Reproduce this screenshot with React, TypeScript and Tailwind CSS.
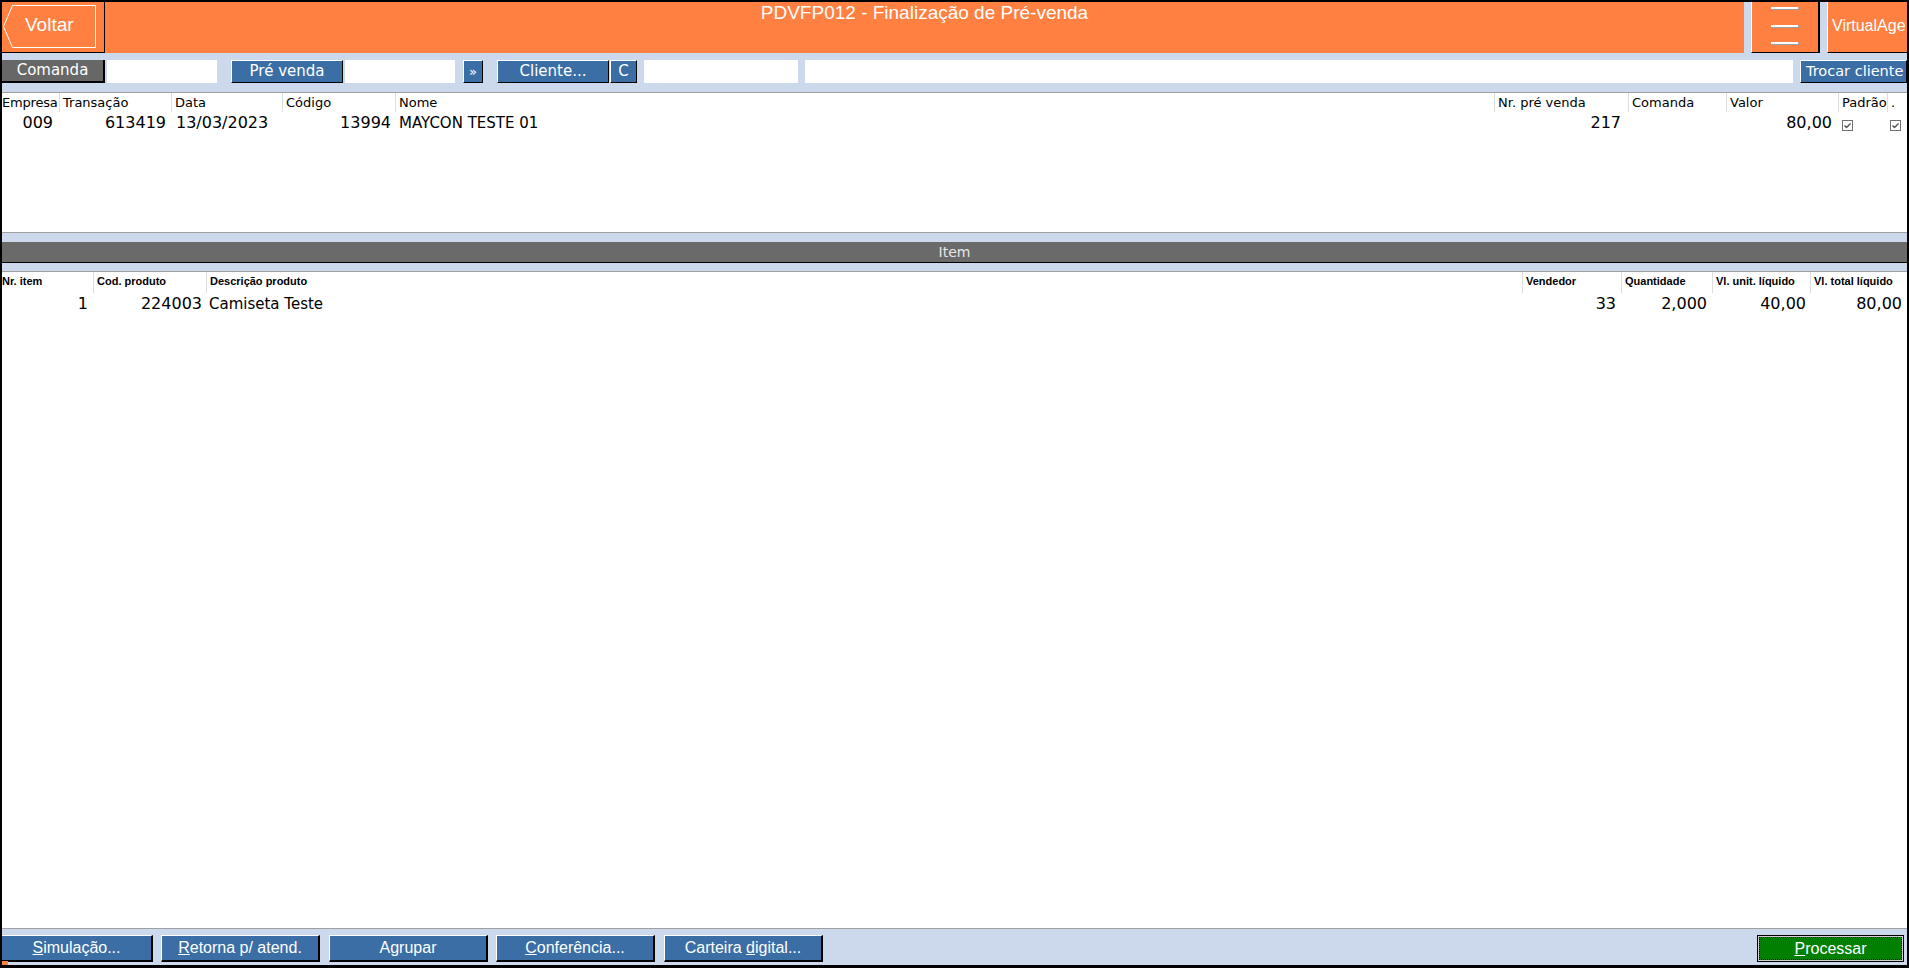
import type { ReactNode } from "react";

const ORANGE = "bg-[#ff8040]";

type Col = { label: string; value?: ReactNode; num?: boolean; check?: boolean; pr?: string };

const vendaCols: Col[] = [
  { label: "Empresa", value: "009", num: true, pr: "pr-[6px]" },
  { label: "Transação", value: "613419", num: true },
  { label: "Data", value: "13/03/2023" },
  { label: "Código", value: "13994", num: true, pr: "pr-[4px]" },
  { label: "Nome", value: "MAYCON TESTE 01" },
  { label: "Nr. pré venda", value: "217", num: true, pr: "pr-[7px]" },
  { label: "Comanda", value: "" },
  { label: "Valor", value: "80,00", num: true, pr: "pr-[6px]" },
  { label: "Padrão", check: true },
  { label: ".", check: true },
];

const itemCols: Col[] = [
  { label: "Nr. item", value: "1", num: true },
  { label: "Cod. produto", value: "224003", num: true, pr: "pr-[4px]" },
  { label: "Descrição produto", value: "Camiseta Teste" },
  { label: "Vendedor", value: "33", num: true },
  { label: "Quantidade", value: "2,000", num: true },
  { label: "Vl. unit. líquido", value: "40,00", num: true, pr: "pr-[4px]" },
  { label: "Vl. total líquido", value: "80,00", num: true },
];

function CheckBox() {
  return (
    <svg width="11" height="11" viewBox="0 0 11 11" aria-hidden="true">
      <rect x="0.5" y="0.5" width="10" height="10" fill="white" stroke="#6f6f6f" />
      <path d="M2.5 5.5 L4.5 7.5 L8.5 3.5" fill="none" stroke="#4a4a4a" strokeWidth="1.3" />
    </svg>
  );
}

function ToolButton({ children, className }: { children: ReactNode; className: string }) {
  return (
    <button
      className={
        "h-[23px] shrink-0 bg-[#3a6ea5] text-white leading-none border border-t-white border-l-white border-r-black border-b-black " +
        className
      }
    >
      {children}
    </button>
  );
}

function FootButton({ children, className }: { children: ReactNode; className: string }) {
  return (
    <button
      className={
        "h-[27px] shrink-0 bg-[#3a6ea5] text-white text-[16px] leading-none font-['Liberation_Sans',Arial,sans-serif] border-t border-l border-t-white border-l-white border-r-2 border-b-2 border-r-black border-b-black " +
        className
      }
    >
      {children}
    </button>
  );
}

function Header() {
  return (
    <div className="flex h-[51px] shrink-0 font-['Liberation_Sans',Arial,sans-serif] text-white">
      {/* Voltar */}
      <div className={`relative flex h-full w-[103px] shrink-0 items-center border-r border-b border-black ${ORANGE}`}>
        <svg className="absolute left-0 top-0" width="100" height="50" aria-hidden="true">
          <polygon points="10.5,3.5 93.5,3.5 93.5,45.5 10.5,45.5 1.5,24.5" fill="none" stroke="white" strokeWidth="1" />
        </svg>
        <span className="pl-[23px] pb-[3px] text-[19px]">Voltar</span>
      </div>
      <div className={`flex-1 text-center text-[19px] leading-[21px] ${ORANGE}`}>
        PDVFP012 - Finalização de Pré-venda
      </div>
      <div className="w-[7px] shrink-0" />
      {/* Menu */}
      <div className={`flex w-[69px] shrink-0 flex-col items-center border-l border-white border-r-2 border-r-black border-b border-b-black pt-[5px] ${ORANGE}`}>
        <div className="h-[3px] w-[28px] bg-white border-b border-r border-[#a0a0a0]" />
        <div className="mt-[15px] h-[3px] w-[28px] bg-white border-b border-r border-[#a0a0a0]" />
        <div className="mt-[14px] h-[3px] w-[28px] bg-white border-b border-r border-[#a0a0a0]" />
      </div>
      <div className="w-[7px] shrink-0" />
      <div className={`flex w-[80px] shrink-0 items-center overflow-hidden whitespace-nowrap border-l border-white border-b border-b-black pl-[4px] pb-[2px] text-[16px] ${ORANGE}`}>
        VirtualAge
      </div>
    </div>
  );
}

function Toolbar() {
  return (
    <div className="flex h-[40px] shrink-0 items-start overflow-hidden whitespace-nowrap border-b border-[#a0a0a0] pt-[7px] text-[15px]">
      <div className="flex h-[23px] w-[103px] shrink-0 items-center justify-center bg-[#676767] text-white border-r-2 border-b-2 border-black">
        Comanda
      </div>
      <div className="ml-[2px] h-[23px] w-[110px] shrink-0 bg-white" />
      <ToolButton className="ml-[14px] w-[112px]">Pré venda</ToolButton>
      <div className="ml-[2px] h-[23px] w-[110px] shrink-0 bg-white" />
      <ToolButton className="ml-[8px] w-[20px] text-[13px]">»</ToolButton>
      <ToolButton className="ml-[14px] w-[112px]">Cliente...</ToolButton>
      <ToolButton className="ml-[1px] w-[27px]">C</ToolButton>
      <div className="ml-[7px] h-[23px] w-[154px] shrink-0 bg-white" />
      <div className="ml-[7px] h-[23px] w-[988px] shrink-0 bg-white" />
      <ToolButton className="ml-[7px] w-[107px] pl-[5px] text-left text-[14.5px]">Trocar cliente</ToolButton>
    </div>
  );
}

function VendaGrid() {
  return (
    <div className="h-[140px] shrink-0 overflow-hidden border-b border-[#a0a0a0] bg-white text-black">
      <div className="grid grid-cols-[57px_112px_111px_113px_1fr_134px_98px_112px_49px_20px]">
        {vendaCols.map((c, i) => (
          <div
            key={c.label}
            className={
              "h-[19px] overflow-hidden whitespace-nowrap text-[13px] leading-[19px] " +
              (i === 0 ? "tracking-[-0.2px]" : "border-l border-[#dedede] pl-[3px]")
            }
          >
            {c.label}
          </div>
        ))}
        {vendaCols.map((c, i) => (
          <div
            key={c.label + "-v"}
            className={
              "h-[22px] overflow-hidden whitespace-nowrap leading-[22px] " +
              (c.check
                ? i === 8
                  ? "pl-[4px] pt-[8px]"
                  : "pl-[3px] pt-[8px]"
                : c.num
                  ? "text-right text-[16px] " + (c.pr ?? "pr-[5px]")
                  : i === 2
                    ? "pl-[5px] text-[16px]"
                    : "pl-[4px] text-[15px]")
            }
          >
            {c.check ? <CheckBox /> : c.value}
          </div>
        ))}
      </div>
    </div>
  );
}

function ItemBar() {
  return (
    <div className="shrink-0">
      <div className="h-[9px]" />
      <div className="flex h-[21px] items-center justify-center border-b border-black bg-[#6a6a6a] text-[14px] text-[#e6e6e6]">
        Item
      </div>
      <div className="h-[9px] border-b border-[#a0a0a0]" />
    </div>
  );
}

function ItemGrid() {
  return (
    <div className="min-h-0 flex-1 overflow-hidden bg-white text-black">
      <div className="grid grid-cols-[91px_113px_1fr_99px_91px_98px_97px]">
        {itemCols.map((c, i) => (
          <div
            key={c.label}
            className={
              "h-[21px] overflow-hidden whitespace-nowrap text-[11px] font-bold leading-[19px] font-['Liberation_Sans',Arial,sans-serif] " +
              (i === 0 ? "" : "border-l border-[#dedede] pl-[3px]")
            }
          >
            {c.label}
          </div>
        ))}
        {itemCols.map((c) => (
          <div
            key={c.label + "-v"}
            className={
              "h-[22px] overflow-hidden whitespace-nowrap leading-[22px] " +
              (c.num ? "text-right text-[16px] " + (c.pr ?? "pr-[5px]") : "pl-[3px] text-[15px]")
            }
          >
            {c.value}
          </div>
        ))}
      </div>
    </div>
  );
}

function Footer() {
  return (
    <div className="flex h-[37px] shrink-0 items-start border-t border-[#a0a0a0] pt-[6px]">
      <FootButton className="w-[151px] border-l-0">
        <u>S</u>imulação...
      </FootButton>
      <FootButton className="ml-[8px] w-[159px]">
        <u>R</u>etorna p/ atend.
      </FootButton>
      <FootButton className="ml-[9px] w-[159px]">
        A<u>g</u>rupar
      </FootButton>
      <FootButton className="ml-[8px] w-[159px]">
        <u>C</u>onferência...
      </FootButton>
      <FootButton className="ml-[9px] w-[159px]">
        Carteira <u>d</u>igital...
      </FootButton>
      <div className="ml-auto mr-[3px] h-[27px] w-[147px] shrink-0 border border-black bg-[#d0d0d0] p-[1px]">
        <div className="flex h-full w-full items-center justify-center border border-dotted border-black bg-[#007f00] text-[16px] text-white font-['Liberation_Sans',Arial,sans-serif]">
          <span>
            <u>P</u>rocessar
          </span>
        </div>
      </div>
    </div>
  );
}

export default function App() {
  return (
    <div className="relative flex h-screen w-full flex-col overflow-hidden border-t-2 border-l-2 border-r-2 border-b-[3px] border-black bg-[#ccd9ed] font-['DejaVu_Sans',sans-serif]">
      <Header />
      <Toolbar />
      <VendaGrid />
      <ItemBar />
      <ItemGrid />
      <Footer />
      <div className="absolute bottom-0 left-0 h-[4px] w-[6px] bg-[#ff8040]" />
    </div>
  );
}
